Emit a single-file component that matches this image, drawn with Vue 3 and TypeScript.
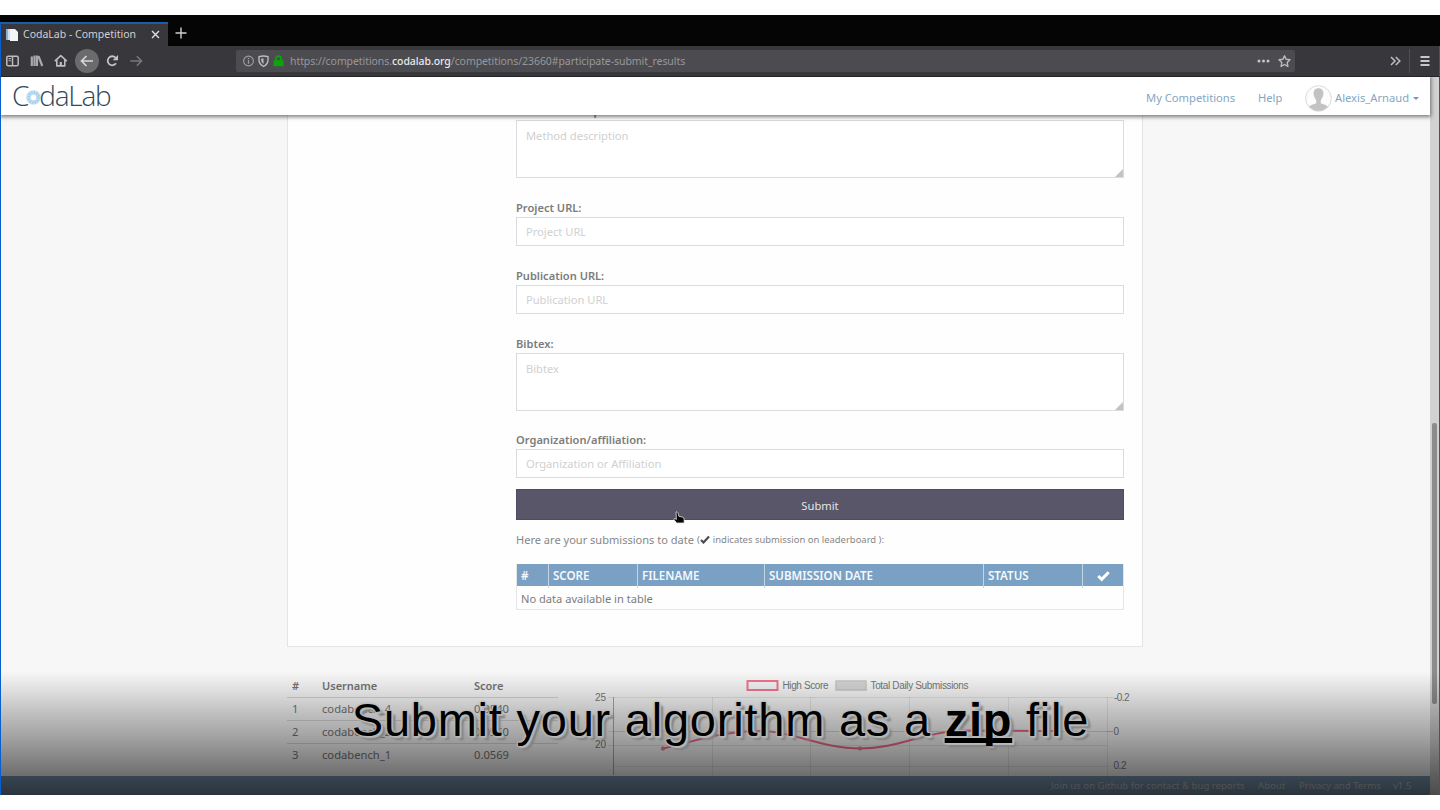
<script setup lang="ts">
interface Field {
  label: string
  placeholder: string
  kind: 'area' | 'line'
  cls: string
}

const fields: Field[] = [
  { label: 'Method description:', placeholder: 'Method description', kind: 'area', cls: 'f-method' },
  { label: 'Project URL:', placeholder: 'Project URL', kind: 'line', cls: 'f-project' },
  { label: 'Publication URL:', placeholder: 'Publication URL', kind: 'line', cls: 'f-publication' },
  { label: 'Bibtex:', placeholder: 'Bibtex', kind: 'area', cls: 'f-bibtex' },
  { label: 'Organization/affiliation:', placeholder: 'Organization or Affiliation', kind: 'line', cls: 'f-org' },
]

const leaders = [
  { rank: 1, name: 'codabench_4', score: '0.0540' },
  { rank: 2, name: 'codabench_2', score: '0.0560' },
  { rank: 3, name: 'codabench_1', score: '0.0569' },
]

const gridX = [110, 208, 307, 406, 505]
const points = [
  [61, 76.5],
  [160, 59],
  [258, 76.5],
  [356, 59],
  [455, 59],
]
</script>

<template>
  <div class="window">
    <div class="tabstrip">
      <div class="tab">
        <svg class="favicon" width="13" height="13" viewBox="0 0 13 13">
          <path d="M0 1h8v11H0z" fill="#cfe0ee" />
          <path d="M4 1h5l3 3v9H4z" fill="#f4f4f6" />
          <path d="M0 1h2v11H0z" fill="#86b3d4" />
        </svg>
        <span class="tab-title">CodaLab - Competition</span>
        <svg class="tab-close" width="9" height="9" viewBox="0 0 9 9">
          <path d="M1 1l7 7M8 1l-7 7" stroke="#e0e0e0" stroke-width="1.4" />
        </svg>
      </div>
      <svg class="tab-new" width="12" height="12" viewBox="0 0 12 12">
        <path d="M6 .5v11M.5 6h11" stroke="#d0d0d0" stroke-width="1.4" />
      </svg>
    </div>

    <div class="toolbar">
      <div class="tools">
        <svg class="tool" viewBox="0 0 24 24" fill="none" stroke="#bdbdbf" stroke-width="1.5">
          <rect x="5.800" y="7.200" width="11.400" height="9.600" rx="1.400" />
          <path d="M11.500 7v10" />
          <path d="M7.600 9.600h2.200M7.600 11.800h2.200" stroke-width="1.1" />
        </svg>
        <svg class="tool" viewBox="0 0 24 24" fill="none" stroke="#a9a9ab" stroke-width="2.200">
          <path d="M6.800 7.500V17M9.500 6.500V17M12 6.500V17M13.500 7.200L17.300 17" />
        </svg>
        <svg class="tool" viewBox="0 0 24 24" fill="none" stroke="#bdbdbf" stroke-width="1.6">
          <path d="M5.800 12.200l6-5.600 6 5.600M7.800 11v5.900h8V11" stroke-linejoin="round" />
          <path d="M11.800 17v-4" stroke-width="2.200" />
        </svg>
        <span class="back">
          <svg class="tool" viewBox="0 0 24 24" fill="none" stroke="#d8d8d9" stroke-width="1.6">
            <path d="M18 12H7M11.500 7L6.500 12l5 5" />
          </svg>
        </span>
        <svg class="tool" viewBox="0 0 24 24" fill="none" stroke="#c4c4c6" stroke-width="1.800">
          <path d="M16 14.200a4.500 4.500 0 1 1-.5-5.500" />
          <path d="M18 6v5.300h-5.300z" fill="#c4c4c6" stroke="none" />
        </svg>
        <svg class="tool" viewBox="0 0 24 24" fill="none" stroke="#78787b" stroke-width="1.5">
          <path d="M6.300 12h11M12.800 7.200l4.800 4.800-4.800 4.800" />
        </svg>
      </div>

      <div class="urlbar">
        <svg width="42" height="14" viewBox="0 0 42 14" fill="none">
          <circle cx="6.500" cy="7" r="4.900" stroke="#a0a0a2" stroke-width="1.1" />
          <path d="M6.500 6.200v3.500M6.500 4v1.300" stroke="#a0a0a2" stroke-width="1.3" />
          <path d="M17 2.700q4.500-1.400 9 0v4q-.5 4-4.500 5.700Q17.500 10.500 17 6.700z" stroke="#bbbbbc" stroke-width="1.4" />
          <path d="M21.500 4.500v5.500q-2-1.500-2.200-3.500v-2z" fill="#bbbbbc" />
          <path d="M31.500 6.200h10v6h-10z" fill="#0ca40c" />
          <path d="M34 7V4.600a2.500 2.500 0 0 1 5 0V7" stroke="#0ca40c" stroke-width="1.700" />
        </svg>
        <span class="url">https://competitions.<b>codalab.org</b>/competitions/23660#participate-submit_results</span>
        <svg class="url-end" width="38" height="14" viewBox="0 0 38 14">
          <g fill="#c6c6c8">
            <circle cx="2" cy="7" r="1.500" />
            <circle cx="6.500" cy="7" r="1.500" />
            <circle cx="11" cy="7" r="1.500" />
          </g>
          <path
            d="M27.500 1.800l1.600 3.500 3.900.5-2.800 2.700.7 3.900-3.400-1.900-3.400 1.900.7-3.900L22 5.800l3.900-.5z"
            fill="none"
            stroke="#bcbcbe"
            stroke-width="1.400"
            stroke-linejoin="round"
          />
        </svg>
      </div>

      <div class="menu">
        <svg width="11" height="10" viewBox="0 0 11 10" fill="none" stroke="#bcbcbe" stroke-width="1.600">
          <path d="M1 1l4 4-4 4M5.800 1l4 4-4 4" />
        </svg>
        <span class="menu-rule"></span>
        <svg width="10" height="10" viewBox="0 0 10 10" stroke="#c8c8ca" stroke-width="1.800">
          <path d="M.5 1h9M.5 5h9M.5 9h9" />
        </svg>
      </div>
    </div>

    <div class="page">
      <header class="site-header">
        <div class="logo">
          <span>C</span>
          <svg width="15" height="15" viewBox="0 0 15 15">
            <circle cx="7.500" cy="7.500" r="5" fill="none" stroke="#c4dff2" stroke-width="4.600" />
            <circle cx="7.500" cy="7.500" r="5" fill="none" stroke="#9cc4e4" stroke-width="2.400" stroke-dasharray="1 1.600" />
          </svg>
          <span>daLab</span>
        </div>
        <nav class="site-nav">
          <a class="nav-comp">My Competitions</a>
          <a class="nav-help">Help</a>
          <svg width="27" height="27" viewBox="0 0 27 27">
            <defs><clipPath id="round"><circle cx="13.500" cy="13.500" r="12.300" /></clipPath></defs>
            <circle cx="13.500" cy="13.500" r="12.800" fill="#fdfdfd" stroke="#d9d9d9" />
            <g clip-path="url(#round)" fill="#c3c3c3">
              <path d="M13.500 3.200c3.400 0 5 2.300 4.900 5.200 0 3-1.600 5.600-2.600 6.600v3.200q5.500 1.400 8.200 4V27H3v-4.800q2.700-2.600 8.200-4V15c-1-1-2.600-3.600-2.600-6.600-.1-2.900 1.500-5.200 4.900-5.200z" />
            </g>
          </svg>
          <a class="nav-user">Alexis_Arnaud</a>
          <i class="caret"></i>
        </nav>
      </header>

      <main class="content">
        <section class="card">
          <div v-for="f in fields" :key="f.label" class="field" :class="f.cls">
            <label>{{ f.label }}</label>
            <div class="control" :class="f.kind">
              <span>{{ f.placeholder }}</span>
              <svg v-if="f.kind === 'area'" class="grip" width="8" height="8" viewBox="0 0 8 8">
                <path d="M8 0v8H0z" fill="#c2c2c2" />
              </svg>
            </div>
          </div>

          <div class="submit">
            <span>Submit</span>
            <svg class="pointer" width="12" height="14" viewBox="0 0 12 14">
              <path
                d="M3 1q1.300-.8 1.900.6l1 3.700 4 .9q1.300.5 1.200 2V12H3.700L1 8.700Q.6 7.500 2 7.600l1.400.8z"
                fill="#080808"
                stroke="#e4e4e4"
                stroke-width=".8"
              />
            </svg>
          </div>

          <p class="note">
            <span class="note-main">Here are your submissions to date</span>
            <span class="note-small">(</span>
            <svg width="10" height="9" viewBox="0 0 10 9">
              <path d="M1 5l2.500 2.500L9 1.500" fill="none" stroke="#4c4c4c" stroke-width="2.200" />
            </svg>
            <span class="note-small tail">indicates submission on leaderboard ):</span>
          </p>

          <div class="grid">
            <div class="grid-head">
              <span>#</span>
              <span>SCORE</span>
              <span>FILENAME</span>
              <span>SUBMISSION DATE</span>
              <span>STATUS</span>
              <span class="tick">
                <svg width="13" height="11" viewBox="0 0 13 11">
                  <path d="M1.200 5l3.500 3.300 7-7" fill="none" stroke="#fff" stroke-width="3" />
                </svg>
              </span>
            </div>
            <div class="grid-empty">No data available in table</div>
          </div>
        </section>

        <section class="results">
          <div class="board">
            <div class="row head"><span>#</span><span>Username</span><span>Score</span></div>
            <div v-for="l in leaders" :key="l.rank" class="row">
              <span>{{ l.rank }}</span><span>{{ l.name }}</span><span>{{ l.score }}</span>
            </div>
          </div>
          <svg class="chart" width="570" height="103" viewBox="0 0 570 103">
            <rect x="145.500" y="9" width="30" height="9" fill="#f5f5f5" stroke="#f0768f" stroke-width="2" />
            <rect x="234" y="9" width="30" height="9" fill="#d6d6d6" stroke="#c8c8c8" stroke-width="1.500" />
            <text x="180.500" y="17" textLength="46">High Score</text>
            <text x="268.500" y="17" textLength="98">Total Daily Submissions</text>
            <path d="M6 25.500h505M505 59.500h6M6 73.500h499M11 94.500h494M6 59.500h5" stroke="#00000014" />
            <path d="M11 59.500h500" stroke="#00000024" />
            <path v-for="x in gridX" :key="x" :d="`M${x}.5 25v78`" stroke="#00000014" />
            <path d="M11.500 25v78" stroke="#00000050" />
            <text x="4" y="28.500" text-anchor="end">25</text>
            <text x="4" y="76" text-anchor="end">20</text>
            <text x="512" y="28.500" textLength="15.500">-0.2</text>
            <text x="511.500" y="62.500">0</text>
            <text x="511.500" y="96.500" textLength="13">0.2</text>
            <path
              d="M61 76.500C98 68 120 59 160 59c30 0 60 17.500 98 17.500S316 62 356 58.500q50 0 99 .5"
              fill="none"
              stroke="#f2688a"
              stroke-width="2"
            />
            <circle v-for="p in points" :key="p[0]" :cx="p[0]" :cy="p[1]" r="1.600" fill="#e98ba0" stroke="#f2688a" />
          </svg>
        </section>
      </main>

      <footer class="site-footer">
        <span class="ft-join">Join us on Github for contact &amp; bug reports</span>
        <span class="ft-about">About</span>
        <span class="ft-terms">Privacy and Terms</span>
        <span class="ft-ver">v1.5</span>
      </footer>

      <div class="scrollbar"><i></i></div>
      <div class="shade"></div>
      <div class="caption"><span>Submit your algorithm as a <b>zip</b> file</span></div>
    </div>
  </div>
</template>

<style>
body {
  background: #fff;
  overflow: hidden;
}
</style>

<style scoped>
* {
  box-sizing: border-box;
}
.window {
  width: 1440px;
  height: 780px;
  margin-top: 15px;
  display: flex;
  flex-direction: column;
  font-family: 'Noto Sans', 'Open Sans', sans-serif;
  white-space: nowrap;
  background: #050505;
}
svg {
  display: block;
  flex: none;
}
.tabstrip {
  height: 31px;
  padding-top: 7px;
  display: flex;
  background: #050505;
}
.tab {
  width: 168px;
  height: 24px;
  border-top: 2px solid #195fa8;
  border-left: 1px solid #0a5fd0;
  background: #38373b;
  display: flex;
  align-items: center;
  padding: 0 0 2px 5px;
}
.tab-title {
  margin: -1px 0 0 4px;
  width: 113px;
  font-size: 10.5px;
  color: #d0d0d2;
}
.tab-close {
  margin-left: 15px;
}
.tab-new {
  margin: 5px 0 0 7px;
}
.toolbar {
  height: 31px;
  background: #38373b;
  border-left: 1px solid #0a5fd0;
  border-right: 1px solid #0a5fd0;
  border-bottom: 1px solid #252528;
  display: flex;
  align-items: center;
}
.tools {
  width: 235px;
  display: flex;
  align-items: center;
}
.tool {
  width: 24px;
  height: 24px;
}
.back {
  margin: 0 1px 0 2px;
  border-radius: 50%;
  background: #6b6a6d;
}
.urlbar {
  width: 1059px;
  height: 22px;
  border-radius: 2px;
  background: #4c4b50;
  display: flex;
  align-items: center;
  padding-left: 6px;
}
.url {
  margin-left: 6px;
  font-size: 10.5px;
  letter-spacing: -0.07px;
  color: #98989b;
}
.url b {
  font-weight: 500;
  color: #e8e8e8;
}
.url-end {
  margin: 0 0 0 auto;
}
.menu {
  margin-left: 95px;
  display: flex;
  align-items: center;
}
.menu-rule {
  width: 1px;
  height: 24px;
  margin: 0 10px 0 8px;
  background: #505053;
}
.page {
  position: relative;
  height: 718px;
  border-left: 1px solid #0a5fd0;
  border-right: 1px solid #0a5fd0;
  background: #f7f7f7;
  overflow: hidden;
}
.site-header {
  position: relative;
  z-index: 2;
  width: 1429px;
  height: 38px;
  background: #fff;
  box-shadow: 0 1px 4px 1px rgba(0, 0, 0, 0.5);
  display: flex;
  justify-content: space-between;
}
.logo {
  display: flex;
  align-items: center;
  padding-left: 11px;
  height: 37px;
  font-family: 'Open Sans', sans-serif;
  font-weight: 300;
  font-size: 28px;
  line-height: 37px;
  letter-spacing: -1.2px;
  color: #2f4a59;
}
.logo svg {
  margin: 4px -2px 0 -2px;
}
.site-nav {
  display: flex;
  align-items: center;
  padding: 4px 11px 0 0;
  font-size: 11.2px;
  color: #84a6c3;
}
.site-nav a {
  margin-top: -1px;
}
.nav-comp {
  width: 112px;
}
.nav-help {
  width: 47px;
}
.site-nav .nav-user {
  margin-left: 3px;
  width: 78px;
}
.caret {
  border: 3px solid transparent;
  border-top-color: #6f97ba;
  border-bottom: 0;
}
.content {
  width: 1429px;
  height: 661px;
  overflow: hidden;
}
.card {
  width: 856px;
  height: 532px;
  margin-left: 286px;
  padding: 0 18px 0 228px;
  border: 1px solid #e4e4e4;
  border-width: 0 1px 1px;
  background: #fefefe;
}
.field {
  display: flex;
  flex-direction: column;
  justify-content: flex-end;
}
.f-method {
  height: 63px;
}
.f-project {
  height: 68px;
}
.f-publication {
  height: 68px;
}
.f-bibtex {
  height: 97px;
}
.f-org {
  height: 67px;
}
.field label {
  height: 18px;
  line-height: 18px;
  font-size: 11.1px;
  font-weight: 600;
  color: #7c7c7c;
  flex: none;
}
.control {
  position: relative;
  flex: none;
  height: 29px;
  border: 1px solid #dcdcdc;
  background: #fff;
  padding: 5px 9px;
  font-size: 11.15px;
  line-height: 17px;
  color: #d0d0d0;
}
.control.area {
  height: 58px;
  padding-top: 6px;
}
.grip {
  position: absolute;
  right: 0;
  bottom: 0;
}
.submit {
  position: relative;
  height: 31px;
  margin-top: 11px;
  padding-top: 2px;
  background: #5a5669;
  border: 1px solid #4f4b62;
  display: flex;
  align-items: center;
  justify-content: center;
  font-size: 11.2px;
  color: #e4e4e8;
}
.pointer {
  position: absolute;
  left: 156px;
  top: 21px;
}
.note {
  margin: 9px 0 0;
  height: 20px;
  display: flex;
  align-items: center;
  color: #868686;
}
.note-main {
  width: 181px;
  font-size: 11.05px;
}
.note-small {
  font-size: 9.45px;
}
.tail {
  margin-left: 3px;
}
.grid {
  margin-top: 15px;
  height: 46px;
  border: 1px solid #e6e6e6;
  border-top: 0;
  font-size: 11.1px;
}
.grid-head {
  height: 22px;
  display: grid;
  grid-template-columns: 31px 89px 127px 219px 99px 1fr;
  background: #7aa1c4;
  color: #f4f8fb;
  font-weight: 600;
  font-size: 11.55px;
  line-height: 24px;
}
.grid-head span {
  padding-left: 4px;
  border-left: 1px solid #c3d4e3;
}
.grid-head span:first-child {
  border-left: 0;
}
.grid-head .tick {
  display: flex;
  align-items: center;
  padding-left: 14px;
}
.grid-empty {
  line-height: 26px;
  height: 23px;
  padding-left: 4px;
  color: #7c7c7c;
}
.results {
  display: flex;
  padding: 24px 0 0 286px;
}
.board {
  width: 271px;
  padding-top: 4px;
  font-size: 11.2px;
  color: #747474;
}
.row {
  display: grid;
  grid-template-columns: 35px 152px 1fr;
  height: 23px;
  line-height: 22px;
  border-bottom: 1px solid #d6d6d6;
}
.row span:first-child {
  padding-left: 5px;
}
.row.head {
  font-weight: 600;
  font-size: 11px;
}
.row:last-child {
  border: 0;
}
.chart {
  margin: 1px 0 0 44px;
  overflow: visible;
  font: 10px 'Liberation Sans', sans-serif;
  fill: #787878;
}
.site-footer {
  position: absolute;
  z-index: 2;
  left: 0;
  bottom: 0;
  width: 1429px;
  height: 19px;
  background: linear-gradient(#7c9cb8, #7890a8);
  display: flex;
  align-items: center;
  font-size: 9.6px;
  color: #c6cacd;
  padding: 0 0 1px 1050px;
}
.ft-join {
  width: 207px;
}
.ft-about {
  width: 41px;
}
.ft-terms {
  width: 94px;
}
.scrollbar {
  position: absolute;
  right: 0;
  top: 0;
  width: 9px;
  height: 718px;
  background: #d2d2d2;
}
.scrollbar i {
  position: absolute;
  left: 2px;
  top: 346px;
  width: 5px;
  height: 281px;
  border-radius: 2px;
  background: #8c8c8c;
}
.shade {
  position: absolute;
  z-index: 3;
  inset: 594px 0 0 0;
  background: linear-gradient(transparent, rgba(0, 0, 0, 0.1) 16%, rgba(0, 0, 0, 0.21) 32%, rgba(0, 0, 0, 0.37) 57%, rgba(0, 0, 0, 0.56) 85%, rgba(0, 0, 0, 0.64));
}
.caption {
  position: absolute;
  z-index: 4;
  left: 1px;
  right: 0;
  top: 613px;
  display: flex;
  justify-content: center;
  font-family: 'Liberation Sans', Arial, sans-serif;
  font-size: 47px;
  line-height: 60px;
  letter-spacing: 0.77px;
  color: #000;
  text-shadow: 0 0 1px #bbb, 1px 0 2px #bbb, -1px 0 2px #bbb, 0 1px 2px #bbb, 0 -1px 2px #bbb, 2px 2px 1px #b4b4b4, 4px 4px 2px #808080;
}
.caption b {
  text-decoration: underline;
  text-decoration-thickness: 5px;
  text-underline-offset: 2px;
  text-decoration-skip-ink: none;
}
</style>
